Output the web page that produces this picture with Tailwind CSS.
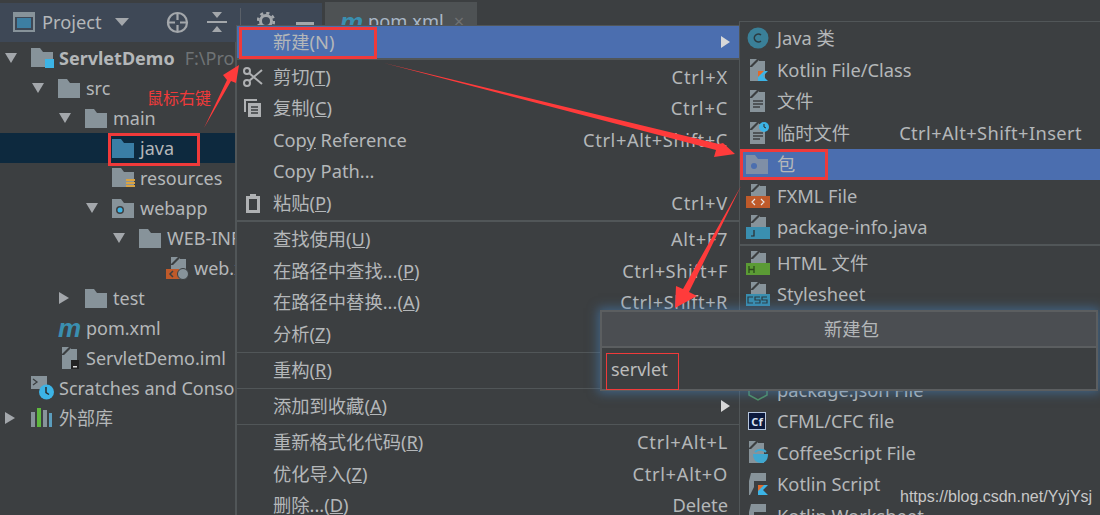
<!DOCTYPE html>
<html><head><meta charset="utf-8"><title>新建包</title>
<script src="https://cdn.jsdelivr.net/npm/@tailwindcss/browser@4"></script></head>
<body class="m-0 bg-[#3c3f41]">
<div class="relative w-[1100px] h-[515px] overflow-hidden bg-[#3c3f41] text-[#b4b7b9] text-[18.300px] leading-none font-['Noto_Sans','Noto_Sans_CJK_SC',sans-serif]">
<svg class="absolute w-0 h-0"><defs>
<path id="folder" d="M0 1h9l3 4h10v15H0z" fill="#87939a"/>
<path id="file" d="M1 0h7L1 7zM3 8l7-7v1h6v20H1V8z" fill="#87939a"/>
</defs></svg>

<div class="flex h-[42px] pt-[3px]">
  <div class="w-[236px] flex items-center pb-[1px] bg-[#3e4856]">
    <svg class="ml-[13px] w-[22px] h-[20px]" viewBox="0 0 22 20"><rect x="1" y="1" width="20" height="18" fill="none" stroke="#87939a" stroke-width="2"/><rect x="1" y="1" width="20" height="4" fill="#87939a"/><rect x="4" y="6" width="14" height="10" fill="#3d7fa3"/></svg>
    <span class="ml-[7px] w-[63px]">Project</span>
    <svg class="ml-[10px] w-[14px] h-[8px]" viewBox="0 0 14 8"><path d="M0 0h14L7 8z" fill="#a3a7ab"/></svg>
    <svg class="ml-[37px] w-[23px] h-[23px]" viewBox="0 0 23 23" fill="none" stroke="#a3a7ab" stroke-width="2.200"><circle cx="11.500" cy="11.500" r="9.500"/><path d="M11.500 2v7M11.500 14v7M2 11.500h7M14 11.500h7"/></svg>
    <svg class="ml-[18px] w-[20px] h-[20px]" viewBox="0 0 20 20" fill="#a3a7ab"><path d="M5 0h10l-5 6zM0 9h20v2H0zM10 14l5 6H5z"/></svg>
  </div>
  <div class="w-[86px] flex items-start pt-[9px] bg-[#3e4856]">
    <div class="ml-[4px] -mt-[4px] w-px h-[20px] bg-[#5a6068]"></div>
    <svg class="ml-[16px] w-[18px] h-[18px]" viewBox="0 0 18 18" fill="none" stroke="#a3a7ab"><circle cx="9" cy="9" r="5.500" stroke-width="3"/><circle cx="9" cy="9" r="8" stroke-width="2.500" stroke-dasharray="3.200 3.080"/></svg>
    <div class="ml-[21px] mt-[10px] w-[18px] h-[3px] bg-[#a3a7ab]"></div>
  </div>
  <div class="ml-[3px] -mt-[1px] w-[152px] bg-[#4e5254] flex items-start pt-[10px] pl-[15px]">
    <span class="w-[28px] font-bold italic text-[#3a8fb0] text-[26px] leading-[20px] font-['Liberation_Sans',sans-serif]">m</span>
    <span class="text-[#a9b7c6]">pom.xml</span>
    <span class="ml-[10px] text-[#6e7173]">×</span>
  </div>
</div>

<div class="w-[236px] h-[473px] border-r border-[#515658] overflow-hidden pt-[1px] whitespace-nowrap text-[18px]">
  <div class="flex items-center h-[30px] pl-[5px]"><svg class="shrink-0 w-[12px] h-[12px]" viewBox="0 0 12 12"><path d="M0 1h12L6 11z" fill="#a3a7ab"/></svg>
    <svg class="shrink-0 ml-[14px] w-[23px] h-[22px]" viewBox="0 0 23 22"><use href="#folder"/><rect x="14" y="12" width="9" height="9" fill="#3cb4e6"/></svg>
    <span class="ml-[5px] font-bold">ServletDemo</span><span class="ml-[10px] text-[#6f7375]">F:\Pro</span></div>
  <div class="flex items-center h-[30px] pl-[32px]"><svg class="shrink-0 w-[12px] h-[12px]" viewBox="0 0 12 12"><path d="M0 1h12L6 11z" fill="#a3a7ab"/></svg>
    <svg class="shrink-0 ml-[14px] w-[22px] h-[20px]" viewBox="0 0 22 20"><use href="#folder"/></svg><span class="ml-[6px]">src</span></div>
  <div class="flex items-center h-[30px] pl-[59px]"><svg class="shrink-0 w-[12px] h-[12px]" viewBox="0 0 12 12"><path d="M0 1h12L6 11z" fill="#a3a7ab"/></svg>
    <svg class="shrink-0 ml-[14px] w-[22px] h-[20px]" viewBox="0 0 22 20"><use href="#folder"/></svg><span class="ml-[6px]">main</span></div>
  <div class="flex items-center h-[30px] pl-[112px] bg-[#0d293e]"><svg class="shrink-0 w-[22px] h-[20px]" viewBox="0 0 22 20"><path d="M0 1h9l3 4h10v15H0z" fill="#3a7ea6"/></svg><span class="ml-[6px]">java</span></div>
  <div class="flex items-center h-[30px] pl-[112px]"><svg class="shrink-0 w-[23px] h-[22px]" viewBox="0 0 23 22"><use href="#folder"/><path d="M14 12h9v2h-9zM14 15h9v2h-9zM14 18h9v2h-9z" fill="#d9a343"/></svg><span class="ml-[5px]">resources</span></div>
  <div class="flex items-center h-[30px] pl-[86px]"><svg class="shrink-0 w-[12px] h-[12px]" viewBox="0 0 12 12"><path d="M0 1h12L6 11z" fill="#a3a7ab"/></svg>
    <svg class="shrink-0 ml-[14px] w-[22px] h-[20px]" viewBox="0 0 22 20"><use href="#folder"/><circle cx="8" cy="12" r="4" fill="#3c3f41"/><circle cx="8" cy="12" r="2.500" fill="#3cb4e6"/></svg><span class="ml-[6px]">webapp</span></div>
  <div class="flex items-center h-[30px] pl-[113px]"><svg class="shrink-0 w-[12px] h-[12px]" viewBox="0 0 12 12"><path d="M0 1h12L6 11z" fill="#a3a7ab"/></svg>
    <svg class="shrink-0 ml-[14px] w-[22px] h-[20px]" viewBox="0 0 22 20"><use href="#folder"/></svg><span class="ml-[6px]">WEB-INF</span></div>
  <div class="flex items-center h-[30px] pl-[166px]"><svg class="shrink-0 w-[23px] h-[23px]" viewBox="0 0 23 23"><use href="#file" x="4"/><rect x="0" y="12" width="13" height="10" fill="#bf5a2a"/><path d="M7 14l-3 3 3 3" stroke="#3c3f41" stroke-width="1.500" fill="none"/><circle cx="17" cy="17" r="5.500" fill="#87939a" stroke="#3c3f41"/></svg><span class="ml-[5px]">web.xml</span></div>
  <div class="flex items-center h-[30px] pl-[58px]"><svg class="shrink-0 w-[12px] h-[12px]" viewBox="0 0 12 12"><path d="M1 0l10 6-10 6z" fill="#a3a7ab"/></svg>
    <svg class="shrink-0 ml-[15px] w-[22px] h-[20px]" viewBox="0 0 22 20"><use href="#folder"/></svg><span class="ml-[6px]">test</span></div>
  <div class="flex items-center h-[30px] pl-[58px]"><span class="w-[22px] font-bold italic text-[#3a8fb0] text-[26px] leading-[20px] font-['Liberation_Sans',sans-serif]">m</span><span class="ml-[6px]">pom.xml</span></div>
  <div class="flex items-center h-[30px] pl-[61px]"><svg class="shrink-0 w-[18px] h-[23px]" viewBox="0 0 18 23"><use href="#file"/><rect x="10" y="13" width="8" height="9" fill="#232323"/><rect x="12" y="19" width="4" height="1.500" fill="#ddd"/></svg><span class="ml-[7px]">ServletDemo.iml</span></div>
  <div class="flex items-center h-[30px] pl-[31px]"><svg class="shrink-0 w-[24px] h-[24px]" viewBox="0 0 24 24"><path d="M0 0h16v13H0z" fill="#87939a"/><path d="M2 3l4 3-4 3" stroke="#3c3f41" stroke-width="1.300" fill="none"/><circle cx="15.500" cy="16" r="7.500" fill="#3cb4e6"/><path d="M15 11v5.500l3 2" stroke="#2b2b2b" stroke-width="1.500" fill="none"/></svg><span class="ml-[4px]">Scratches and Consoles</span></div>
  <div class="flex items-center h-[30px] pl-[4px]"><svg class="shrink-0 w-[12px] h-[12px]" viewBox="0 0 12 12"><path d="M1 0l10 6-10 6z" fill="#a3a7ab"/></svg>
    <svg class="shrink-0 ml-[15px] w-[22px] h-[20px]" viewBox="0 0 22 20"><rect y="4" width="4" height="15" fill="#87939a"/><rect x="6" y="0" width="4" height="19" fill="#5fb83f"/><rect x="12" y="2" width="4" height="17" fill="#87939a"/><rect x="18" y="5" width="3" height="14" fill="#5b9dbd"/></svg><span class="ml-[6px]">外部库</span></div>
</div>

<!-- main context menu -->
<div class="absolute left-[236px] top-[25px] w-[503px] h-[490px] bg-[#3c3f41] border-t border-l border-[#515658]">
  <div class="flex items-center justify-between h-[32px] bg-[#4b6eaf] pl-[36px] pr-[9px]"><span>新建(<span>N</span>)</span><svg class="w-[9px] h-[12px]" viewBox="0 0 9 12"><path d="M0 0l9 6-9 6z" fill="#d8d8d8"/></svg></div>
  <div class="h-[2px] mb-[1px] bg-[#515658]"></div>
  <div class="flex items-center justify-between h-[31.500px] pl-[6px] pr-[11px]"><span class="flex items-center"><svg class="w-[20px] h-[20px] mr-[10px]" viewBox="0 0 20 20" fill="none" stroke="#afb1b3" stroke-width="2"><circle cx="4" cy="4" r="3"/><circle cx="4" cy="16" r="3"/><path d="M6 6l13 11M6 14L19 3"/></svg>剪切(<span class="underline">T</span>)</span><span class="tracking-[0.800px]">Ctrl+X</span></div>
  <div class="flex items-center justify-between h-[31.500px] pl-[6px] pr-[11px]"><span class="flex items-center"><svg class="w-[20px] h-[20px] mr-[10px]" viewBox="0 0 20 20" fill="#afb1b3"><path d="M1 1h13v2H3v11H1zM5 5h13v14H5z"/><path d="M8 9h7M8 12h7M8 15h7" stroke="#3c3f41" stroke-width="1.400"/></svg>复制(<span class="underline">C</span>)</span><span class="tracking-[0.800px]">Ctrl+C</span></div>
  <div class="flex items-center justify-between h-[31.500px] pl-[36px] pr-[11px]"><span>Cop<span class="underline">y</span> Reference</span><span class="tracking-[0.600px]">Ctrl+Alt+Shift+C</span></div>
  <div class="flex items-center h-[31.500px] pl-[36px] pr-[11px]"><span>Copy Path...</span></div>
  <div class="flex items-center justify-between h-[31.500px] pl-[6px] pr-[11px]"><span class="flex items-center"><svg class="w-[20px] h-[20px] mr-[10px]" viewBox="0 0 20 20"><path d="M3 3h4V1h6v2h4v17H3z" fill="#afb1b3"/><rect x="6" y="6" width="8" height="11" fill="#3c3f41"/></svg>粘贴(<span class="underline">P</span>)</span><span class="tracking-[0.800px]">Ctrl+V</span></div>
  <div class="h-[2px] my-[1.500px] bg-[#515658]"></div>
  <div class="flex items-center justify-between h-[31.500px] pl-[36px] pr-[11px]"><span>查找使用(<span class="underline">U</span>)</span><span class="tracking-[0.600px]">Alt+F7</span></div>
  <div class="flex items-center justify-between h-[31.500px] pl-[36px] pr-[11px]"><span>在路径中查找...(<span class="underline">P</span>)</span><span class="tracking-[0.500px]">Ctrl+Shift+F</span></div>
  <div class="flex items-center justify-between h-[31.500px] pl-[36px] pr-[11px]"><span>在路径中替换...(<span class="underline">A</span>)</span><span class="tracking-[0.500px]">Ctrl+Shift+R</span></div>
  <div class="flex items-center h-[31.500px] pl-[36px] pr-[11px]"><span>分析(<span class="underline">Z</span>)</span></div>
  <div class="h-px my-[2px] bg-[#515658]"></div>
  <div class="flex items-center h-[31.500px] pl-[36px] pr-[11px]"><span>重构(<span class="underline">R</span>)</span></div>
  <div class="h-px mt-[2px] mb-px bg-[#515658]"></div>
  <div class="flex items-center justify-between h-[31.500px] pl-[36px] pr-[9px]"><span>添加到收藏(<span class="underline">A</span>)</span><svg class="w-[9px] h-[12px]" viewBox="0 0 9 12"><path d="M0 0l9 6-9 6z" fill="#d8d8d8"/></svg></div>
  <div class="h-px my-[2px] bg-[#515658]"></div>
  <div class="flex items-center justify-between h-[31.500px] pl-[36px] pr-[11px]"><span>重新格式化代码(<span class="underline">R</span>)</span><span class="tracking-[0.700px]">Ctrl+Alt+L</span></div>
  <div class="flex items-center justify-between h-[31.500px] pl-[36px] pr-[11px]"><span>优化导入(<span class="underline">Z</span>)</span><span class="tracking-[0.700px]">Ctrl+Alt+O</span></div>
  <div class="flex items-center justify-between h-[31.500px] pl-[36px] pr-[11px]"><span>删除...(<span class="underline">D</span>)</span><span>Delete</span></div>
</div>

<!-- submenu -->
<div class="absolute left-[739px] top-[21px] w-[361px] h-[494px] pt-[0.500px] bg-[#3c3f41] border-t border-l border-[#515658]">
  <div class="flex items-center h-[31.500px] pl-[7px]"><svg class="w-[22px] h-[22px] mr-[8px]" viewBox="0 0 22 22"><circle cx="11" cy="11" r="10.500" fill="#3a8098"/><path d="M14 8a4 4 0 1 0 0 6" fill="none" stroke="#2b3a40" stroke-width="1.600"/></svg>Java 类</div>
  <div class="flex items-center h-[31.500px] pl-[9px]"><svg class="w-[20px] h-[22px] mr-[8px]" viewBox="0 0 20 22"><use href="#file"/><path d="M9 12h10l-5 5 5 5H9z" fill="#3cb4e6"/><path d="M9 12h6l-6 6z" fill="#e06a2b"/></svg>Kotlin File/Class</div>
  <div class="flex items-center h-[31.500px] pl-[9px]"><svg class="w-[20px] h-[22px] mr-[8px]" viewBox="0 0 20 22"><use href="#file"/><path d="M4 11h10M4 14h10M4 17h7" stroke="#3c3f41" stroke-width="1.300"/></svg>文件</div>
  <div class="flex items-center h-[31.500px] pl-[9px]"><svg class="w-[20px] h-[22px] mr-[8px]" viewBox="0 0 20 22"><use href="#file"/><path d="M4 11h10M4 14h10M4 17h7" stroke="#3c3f41" stroke-width="1.300"/><circle cx="15" cy="5" r="5" fill="#3cb4e6"/><path d="M15 2v3l2 1" stroke="#2b2b2b" fill="none"/></svg><span>临时文件</span><span class="ml-auto mr-[18px] tracking-[0.400px]">Ctrl+Alt+Shift+Insert</span></div>
  <div class="flex items-center h-[31.500px] pl-[6px] bg-[#4b6eaf]"><svg class="w-[22px] h-[20px] mr-[9px]" viewBox="0 0 22 20"><path d="M0 1h9l3 4h10v15H0z" fill="#7f8fa6"/><circle cx="8" cy="12" r="3" fill="#4b6eaf"/></svg>包</div>
  <div class="flex items-center h-[31.500px] pl-[6px]"><svg class="w-[24px] h-[24px] mr-[7px]" viewBox="0 0 24 24"><use href="#file" x="4"/><rect y="12" width="24" height="12" fill="#bf5a2a"/><path d="M9 15l-3 3 3 3M15 15l3 3-3 3" stroke="#e8e8e8" stroke-width="1.200" fill="none"/></svg>FXML File</div>
  <div class="flex items-center h-[31.500px] pl-[6px]"><svg class="w-[24px] h-[24px] mr-[7px]" viewBox="0 0 24 24"><use href="#file" x="4"/><rect y="12" width="24" height="12" fill="#3a8fb0"/><path d="M8 15v6H5" stroke="#2b2b2b" stroke-width="1.200" fill="none"/></svg>package-info.java</div>
  <div class="h-[2px] my-[1px] bg-[#515658]"></div>
  <div class="flex items-center h-[31.500px] pl-[6px]"><svg class="w-[24px] h-[24px] mr-[7px]" viewBox="0 0 24 24"><use href="#file" x="4"/><rect y="12" width="24" height="12" fill="#5b9b35"/><path d="M3 15v7M8 15v7M3 18.500h5" stroke="#2c4a1c" stroke-width="1.300"/></svg>HTML 文件</div>
  <div class="flex items-center h-[31.500px] pl-[6px]"><svg class="w-[24px] h-[24px] mr-[7px]" viewBox="0 0 24 24"><use href="#file" x="4"/><rect y="12" width="24" height="12" fill="#3a8fb0"/><path d="M7 15H2v6h5M14 15H9v3h5v3H9M21 15h-5v3h5v3h-5" stroke="#2b3a40" stroke-width="1.200" fill="none"/></svg>Stylesheet</div>
  <div class="h-[64px]"></div>
  <div class="flex items-center h-[31.500px] pl-[7px]"><svg class="w-[22px] h-[22px] mr-[8px]" viewBox="0 0 22 22"><path d="M11 1l9 5v10l-9 5-9-5V6z" fill="none" stroke="#4f9063" stroke-width="1.500"/></svg>package.json File</div>
  <div class="flex items-center h-[31.500px] pl-[8px]"><span class="flex items-center justify-center w-[18px] h-[18px] mr-[11px] bg-[#0c1a3e] border border-[#b6c6de] text-[11px] text-[#dbe6f5] font-bold">Cf</span>CFML/CFC file</div>
  <div class="flex items-center h-[31.500px] pl-[8px]"><svg class="w-[21px] h-[23px] mr-[8px]" viewBox="0 0 21 23"><use href="#file"/><path d="M5 13h15c0 5-2 9-7 9s-8-4-8-9z" fill="#3fa7d0"/><path d="M7 11c3-3 8-3 11 0" stroke="#3fa7d0" stroke-width="2" fill="none"/></svg>CoffeeScript File</div>
  <div class="flex items-center h-[31.500px] pl-[8px]"><svg class="w-[21px] h-[23px] mr-[8px]" viewBox="0 0 21 23"><path d="M3 0h15v8H6v6l-4 8H1V8z" fill="#87939a"/><path d="M10 12h10l-5 5 5 5H10z" fill="#3cb4e6"/><path d="M10 12h6l-6 6z" fill="#e06a2b"/></svg>Kotlin Script</div>
  <div class="flex items-center h-[31.500px] pl-[8px]"><svg class="w-[21px] h-[23px] mr-[8px]" viewBox="0 0 21 23"><path d="M3 0h15v8H6v6l-4 8H1V8z" fill="#87939a"/></svg>Kotlin Worksheet</div>
</div>

<!-- dialog -->
<div class="absolute left-[600px] top-[310px] w-[498px] h-[81px] bg-[#3c3f41] border-2 border-[#5b5e60] shadow-[0_0_10px_2px_rgba(70,130,190,0.55)]">
  <div class="flex items-center justify-center h-[36px] pl-[5px] bg-[#4b4e52] border-b-2 border-[#5b5e60]">新建包</div>
  <div class="flex items-center h-[41px] pl-[9px] text-[18px] text-[#bbbbbb]">servlet</div>
</div>
<div class="absolute left-[606px] top-[353px] w-[73px] h-[37px] border border-[#f03a3a]"></div>

<!-- annotations -->
<div class="absolute left-[108px] top-[133px] w-[92px] h-[33px] border-[3px] border-[#f03a3a]"></div>
<div class="absolute left-[239px] top-[27px] w-[138px] h-[32px] border-[3px] border-[#f03a3a]"></div>
<div class="absolute left-[740px] top-[149px] w-[88px] h-[31px] border-[3px] border-[#f03a3a]"></div>
<span class="absolute left-[147px] top-[90px] text-[16px] leading-[16px] text-[#f03a3a]">鼠标右键</span>
<svg class="absolute left-0 top-0 w-[1100px] h-[515px] pointer-events-none" viewBox="0 0 1100 515" fill="#ff3b3b">
  <path d="M204 128L227 80 223 75 239 65 236 83 231 81z"/>
  <path d="M384 63L719 144 723 143 735 154 714 157 716 150z"/>
  <path d="M741 186L689 292 697 296 675 308 676 286 683 289z"/>
</svg>
<span class="absolute left-[900px] top-[488px] text-[16px] leading-[18px] text-[#c8c8c8] font-['Liberation_Sans',sans-serif]">https://blog.csdn.net/YyjYsj</span>
</div>
</body></html>
